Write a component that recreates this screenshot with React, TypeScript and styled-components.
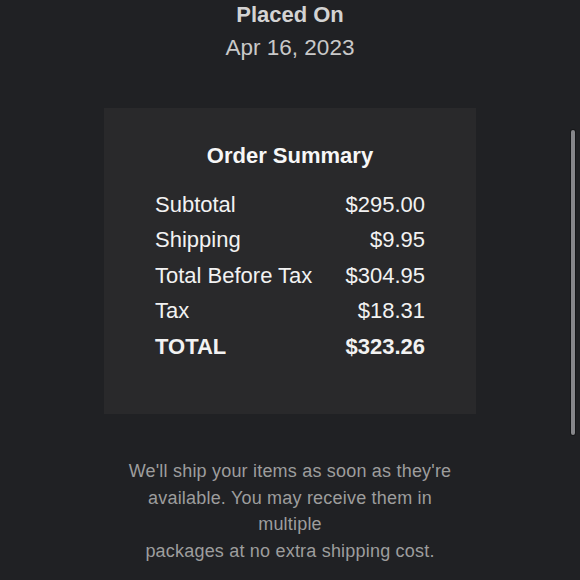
import React from 'react';
import styled, { createGlobalStyle } from 'styled-components';

const GlobalStyle = createGlobalStyle`
  html, body {
    margin: 0;
    padding: 0;
    background: #202124;
  }
  body {
    font-family: "Liberation Sans", Arial, Helvetica, sans-serif;
    overflow: hidden;
  }
`;

const Page = styled.div`
  width: 580px;
  height: 580px;
  display: flex;
  flex-direction: column;
  align-items: center;
  padding-top: 2px;
  box-sizing: border-box;
`;

const PlacedLabel = styled.div`
  font-size: 22px;
  line-height: 26px;
  font-weight: 700;
  color: #d3d3d3;
`;

const PlacedDate = styled.div`
  margin-top: 7px;
  font-size: 22.5px;
  line-height: 26px;
  color: #c9c9c9;
`;

const Card = styled.div`
  margin-top: 47px;
  width: 372px;
  box-sizing: border-box;
  padding: 35px 51px 50px;
  background: #29292b;
  display: flex;
  flex-direction: column;
`;

const CardTitle = styled.div`
  font-size: 22px;
  line-height: 26px;
  font-weight: 700;
  color: #f7f7f7;
  text-align: center;
  margin-bottom: 18px;
`;

const Row = styled.div<{ $bold?: boolean }>`
  display: flex;
  justify-content: space-between;
  font-size: 22px;
  line-height: 35.4px;
  font-weight: ${p => (p.$bold ? 700 : 400)};
  color: #f2f2f2;
`;

const Note = styled.p`
  margin: 44px 0 0;
  max-width: 336px;
  text-align: center;
  font-size: 18px;
  line-height: 26.5px;
  letter-spacing: 0.2px;
  color: #9d9d9d;
`;

const ScrollIndicator = styled.div`
  position: fixed;
  right: 5px;
  top: 130px;
  width: 4px;
  height: 305px;
  border-radius: 2px;
  background: #86868a;
  box-shadow: 0 0 0 1px rgba(0, 0, 0, 0.35);
`;

const rows = [
  { label: 'Subtotal', value: '$295.00' },
  { label: 'Shipping', value: '$9.95' },
  { label: 'Total Before Tax', value: '$304.95' },
  { label: 'Tax', value: '$18.31' },
  { label: 'TOTAL', value: '$323.26', bold: true },
];

const App = () => {
  return (
    <>
      <GlobalStyle />
      <Page>
        <PlacedLabel>Placed On</PlacedLabel>
        <PlacedDate>Apr 16, 2023</PlacedDate>

        <Card>
          <CardTitle>Order Summary</CardTitle>
          {rows.map(row => (
            <Row key={row.label} $bold={row.bold}>
              <span>{row.label}</span>
              <span>{row.value}</span>
            </Row>
          ))}
        </Card>

        <Note>
          We'll ship your items as soon as they're available. You may receive them in multiple
          <br />
          packages at no extra shipping cost.
        </Note>
      </Page>
      <ScrollIndicator />
    </>
  );
};

export default App;
